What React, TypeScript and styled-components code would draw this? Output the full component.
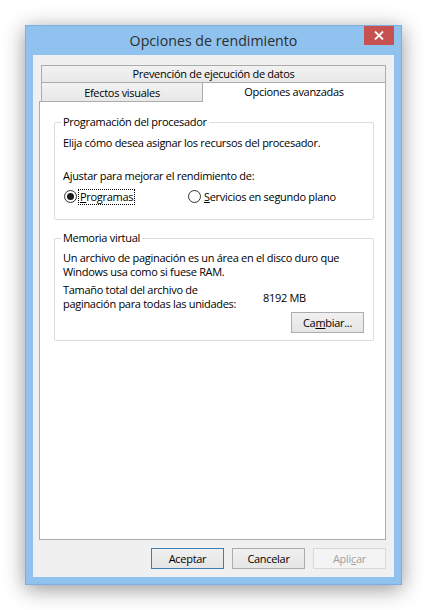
import React from "react";
import styled, { createGlobalStyle } from "styled-components";

const GlobalStyle = createGlobalStyle`
  html, body {
    margin: 0;
    background: #ffffff;
  }
  body {
    font-family: "Open Sans", "Noto Sans", sans-serif;
    color: #000;
  }
`;

const Page = styled.div`
  padding: 25px 0 0 25px;
  height: 610px;
  box-sizing: border-box;
`;

const Window = styled.div`
  width: 377px;
  box-sizing: border-box;
  display: flex;
  flex-direction: column;
  border: 1px solid #7cafdf;
  background: #8fc2ee;
  padding: 0 7px 7px;
  box-shadow: 0 4px 20px rgba(0, 0, 0, 0.42);
`;

const TitleBar = styled.div`
  height: 29px;
  display: grid;
  grid-template-columns: 30px 1fr 30px;
  align-items: start;
`;

const Title = styled.div`
  grid-column: 2;
  text-align: center;
  font-size: 14.2px;
  line-height: 30px;
  color: #2d2d2d;
`;

const CloseButton = styled.div`
  grid-column: 3;
  height: 19px;
  background: #c75050;
  display: flex;
  align-items: center;
  justify-content: center;
`;

const Client = styled.div`
  background: #f0f0f0;
  padding: 10px 8px 8px 6px;
  display: flex;
  flex-direction: column;
  font-size: 11px;
  letter-spacing: -0.3px;
`;

const TabRow = styled.div`
  display: flex;
  height: 18px;
  margin-left: 2px;
`;

const Tab = styled.div<{ $selected?: boolean; $full?: boolean; $width?: number }>`
  box-sizing: border-box;
  text-align: center;
  color: #000;
  ${({ $width }) => ($width ? `width: ${$width}px;` : "flex: 1;")}
  ${({ $full }) =>
    $full
      ? `border: 1px solid #acacac; line-height: 16px; background: linear-gradient(#f2f2f2, #e8e8e8);`
      : ""}
  ${({ $selected, $full }) =>
    !$full && !$selected
      ? `border-left: 1px solid #acacac; line-height: 19px; background: linear-gradient(#f2f2f2, #e8e8e8);`
      : ""}
  ${({ $selected }) =>
    $selected
      ? `position: relative; z-index: 1; height: 20px; margin-top: -1px;
         border: 1px solid #acacac; border-bottom: none; background: #fff;
         line-height: 17px;`
      : ""}
`;

const Panel = styled.div`
  box-sizing: border-box;
  height: 439px;
  border: 1px solid #acacac;
  background: #ffffff;
  padding: 12px 11px 0 14px;
  display: flex;
  flex-direction: column;
`;

const Group = styled.fieldset<{ $mt?: number; $pb?: number }>`
  margin: ${({ $mt }) => $mt ?? 0}px 0 0;
  border: 1px solid #dcdcdc;
  border-radius: 2px;
  padding: 0 9px ${({ $pb }) => $pb ?? 14}px 8px;
  min-width: 0;
`;

const Legend = styled.legend`
  padding: 0 2px;
  margin-left: -2px;
  line-height: 16px;
`;

const Line = styled.div<{ $mt?: number; $lh?: number }>`
  margin-top: ${({ $mt }) => $mt ?? 0}px;
  line-height: ${({ $lh }) => $lh ?? 15}px;
`;

const RadioRow = styled.div`
  margin-top: 5px;
  display: grid;
  grid-template-columns: 124px auto;
  height: 17px;
  align-items: center;
`;

const RadioItem = styled.label`
  display: flex;
  align-items: center;
  gap: 2px;
`;

const RadioCircle = styled.span<{ $checked?: boolean }>`
  box-sizing: border-box;
  width: 13px;
  height: 13px;
  margin-left: 1px;
  border-radius: 50%;
  border: 1px solid #333;
  background: radial-gradient(circle, #ffffff 60%, #ececec);
  display: flex;
  align-items: center;
  justify-content: center;

  &::after {
    content: "";
    width: 7px;
    height: 7px;
    border-radius: 50%;
    background: ${({ $checked }) => ($checked ? "#1a1a1a" : "transparent")};
  }
`;

const RadioLabel = styled.span<{ $focused?: boolean }>`
  padding: 0 1px;
  line-height: 14px;
  outline: ${({ $focused }) => ($focused ? "1px dotted #000" : "none")};
`;

const SizeRow = styled.div`
  margin-top: 4px;
  display: grid;
  grid-template-columns: 200px auto;
  align-items: center;
`;

const ButtonBar = styled.div<{ $mt?: number }>`
  display: flex;
  justify-content: flex-end;
  gap: 8px;
  margin-top: ${({ $mt }) => $mt ?? 0}px;
`;

const Button = styled.button<{ $default?: boolean }>`
  box-sizing: border-box;
  width: 73px;
  height: 21px;
  padding: 0;
  font-family: "Open Sans", "Noto Sans", sans-serif;
  font-size: 11px;
  letter-spacing: -0.3px;
  color: #000;
  border: 1px solid ${({ $default }) => ($default ? "#3c7fb1" : "#acacac")};
  background: linear-gradient(#f0f0f0, #e5e5e5);

  &:disabled {
    color: #a0a0a0;
    border-color: #d9d9d9;
    background: #f4f4f4;
  }
`;

const CloseIcon = () => (
  <svg width="10" height="9" viewBox="0 0 10 9">
    <path d="M1 0.5 L9 8.5 M9 0.5 L1 8.5" stroke="#fff" strokeWidth="1.8" />
  </svg>
);

export default function App() {
  return (
    <Page>
      <GlobalStyle />
      <Window>
        <TitleBar>
          <Title>Opciones de rendimiento</Title>
          <CloseButton>
            <CloseIcon />
          </CloseButton>
        </TitleBar>
        <Client>
          <TabRow>
            <Tab $full>Prevención de ejecución de datos</Tab>
          </TabRow>
          <TabRow>
            <Tab $width={161}>Efectos visuales</Tab>
            <Tab $selected>Opciones avanzadas</Tab>
          </TabRow>
          <Panel>
            <Group>
              <Legend>Programación del procesador</Legend>
              <Line $mt={5}>Elija cómo desea asignar los recursos del procesador.</Line>
              <Line $mt={18}>Ajustar para mejorar el rendimiento de:</Line>
              <RadioRow>
                <RadioItem>
                  <RadioCircle $checked />
                  <RadioLabel $focused>
                    <u>P</u>rogramas
                  </RadioLabel>
                </RadioItem>
                <RadioItem>
                  <RadioCircle />
                  <RadioLabel>
                    <u>S</u>ervicios en segundo plano
                  </RadioLabel>
                </RadioItem>
              </RadioRow>
            </Group>
            <Group $mt={10} $pb={7}>
              <Legend>Memoria virtual</Legend>
              <Line $mt={5} $lh={14}>
                Un archivo de paginación es un área en el disco duro que
                <br />
                Windows usa como si fuese RAM.
              </Line>
              <SizeRow>
                <Line $lh={14}>
                  Tamaño total del archivo de
                  <br />
                  paginación para todas las unidades:
                </Line>
                <span>8192 MB</span>
              </SizeRow>
              <ButtonBar $mt={1}>
                <Button>
                  Ca<u>m</u>biar...
                </Button>
              </ButtonBar>
            </Group>
          </Panel>
          <ButtonBar $mt={8}>
            <Button $default>Aceptar</Button>
            <Button>Cancelar</Button>
            <Button disabled>
              Apli<u>c</u>ar
            </Button>
          </ButtonBar>
        </Client>
      </Window>
    </Page>
  );
}
